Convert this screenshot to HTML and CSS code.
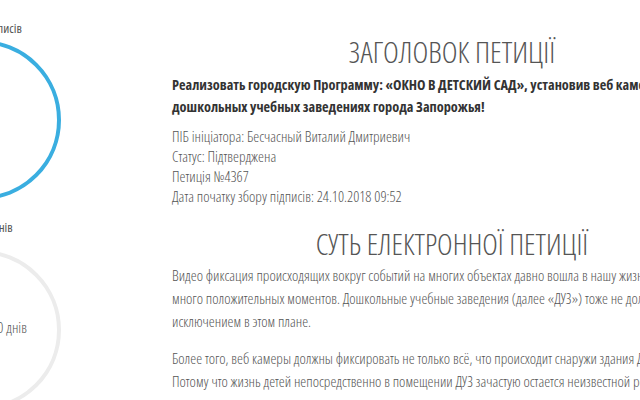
FILE: index.html
```html
<!DOCTYPE html>
<html lang="uk">
<head>
<meta charset="utf-8">
<title>Петиція №4367</title>
<link rel="stylesheet" href="styles.css">
</head>
<body>
<div class="page">
  <aside class="side">
    <div class="stat">
      <div class="stat-label">Кількість підписів</div>
      <div class="ring ring-blue"></div>
    </div>
    <div class="stat stat-days">
      <div class="stat-label">Залишок днів</div>
      <div class="ring ring-grey"><span class="ring-text">Залишилось 90 днів</span></div>
    </div>
  </aside>
  <main class="main">
    <h1 class="title">ЗАГОЛОВОК ПЕТИЦІЇ</h1>
    <p class="lead">Реализовать городскую Программу: «ОКНО В ДЕТСКИЙ САД», установив веб камеры во всех дошкольных учебных заведениях города Запорожья!</p>
    <ul class="meta">
      <li>ПІБ ініціатора: Бесчасный Виталий Дмитриевич</li>
      <li>Статус: Підтверджена</li>
      <li>Петиція №4367</li>
      <li>Дата початку збору підписів: 24.10.2018 09:52</li>
    </ul>
    <h2 class="title title-2">СУТЬ ЕЛЕКТРОННОЇ ПЕТИЦІЇ</h2>
    <p class="text">Видео фиксация происходящих вокруг событий на многих объектах давно вошла в нашу жизнь и принесла много положительных моментов. Дошкольные учебные заведения (далее «ДУЗ») тоже не должны быть исключением в этом плане.</p>
    <p class="text">Более того, веб камеры должны фиксировать не только всё, что происходит снаружи здания ДУЗ, но и внутри. Потому что жизнь детей непосредственно в помещении ДУЗ зачастую остается неизвестной родителям.</p>
  </main>
</div>
</body>
</html>
```
FILE: styles.css
```css
html, body {
  margin: 0;
  padding: 0;
  background: #fff;
  overflow: hidden;
}
body {
  font-family: "Open Sans", "Liberation Sans", sans-serif;
  font-stretch: 75%;
  color: #555;
}
.page {
  display: flex;
  margin-left: -109px;
  width: 1000px;
}
.side {
  flex: none;
  width: 180px;
  padding-top: 20px;
}
.stat {
  display: flex;
  flex-direction: column;
  align-items: center;
}
.stat-days {
  margin-top: 19px;
}
.stat-label {
  font-size: 13px;
  font-weight: 400;
  color: #555;
  line-height: 16px;
  margin-bottom: 4px;
}
.ring {
  box-sizing: border-box;
  width: 160px;
  height: 160px;
  border-radius: 50%;
  display: flex;
  align-items: center;
  justify-content: center;
}
.ring-blue {
  border: 4px solid #3aaee0;
}
.ring-grey {
  margin-top: 11px;
  border: 4px solid #ececec;
}
.ring-text {
  font-size: 15px;
  font-weight: 300;
  color: #555;
  margin-top: -6px;
  margin-left: -8px;
}
.main {
  flex: none;
  width: 560px;
  margin-left: 101px;
  padding-top: 32px;
}
.title {
  margin: 0;
  text-align: center;
  font-weight: 300;
  font-size: 30px;
  line-height: 40px;
  color: #555;
}
.lead {
  margin: 2px 0 0;
  font-weight: 700;
  font-size: 14.3px;
  line-height: 22px;
  color: #333;
}
.meta {
  list-style: none;
  margin: 8px 0 0;
  padding: 0;
  font-size: 15px;
  font-weight: 300;
  line-height: 20px;
  color: #555;
}
.title-2 {
  margin-top: 18px;
  font-size: 29.5px;
}
.text {
  margin: 0;
  font-size: 15px;
  font-weight: 300;
  line-height: 23px;
  color: #555;
}
.text + .text {
  margin-top: 14px;
}
```
